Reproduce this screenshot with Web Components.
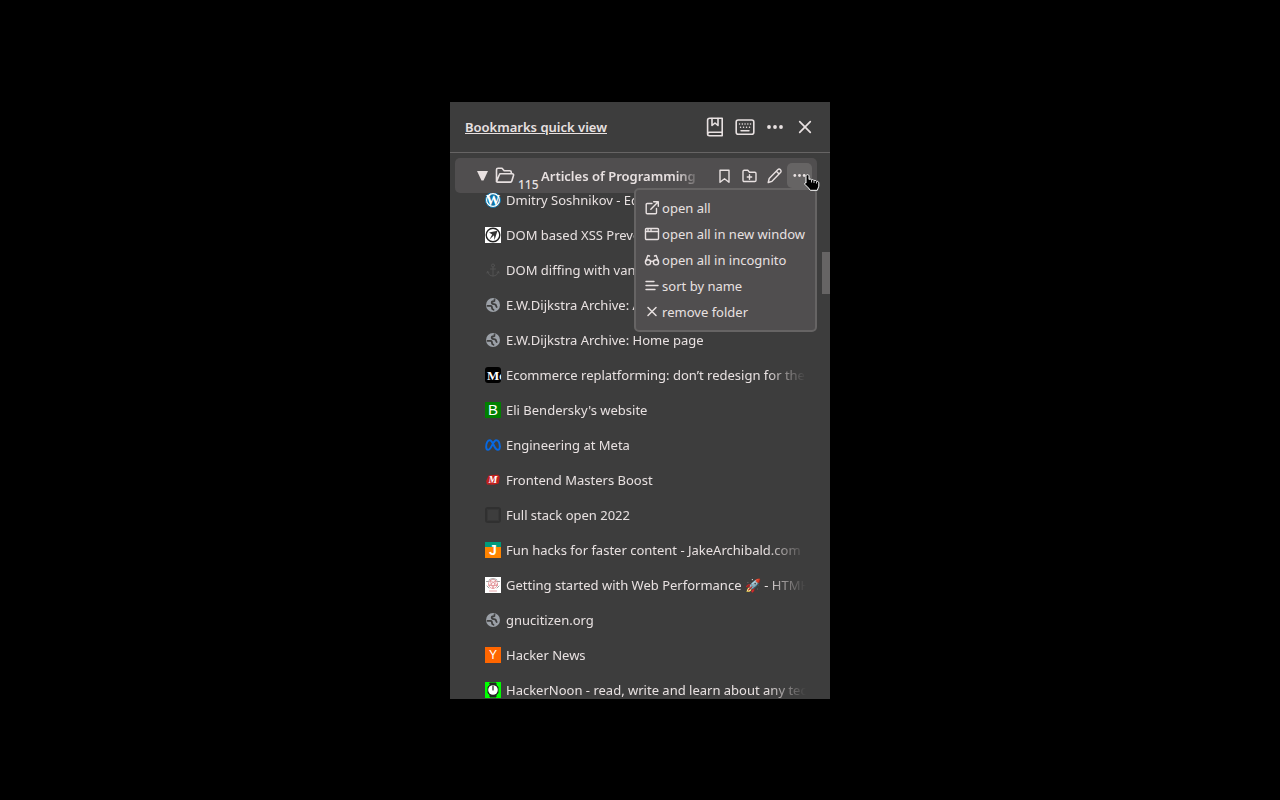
<!DOCTYPE html>
<html lang="en">
<head>
  <meta charset="utf-8">
  <meta name="viewport" content="width=device-width, initial-scale=1">
  <title>Bookmarks quick view</title>
  <style>
    :root {
      --bg: #3d3d3d;
      --raised: #504e4f;
      --line: #666464;
      --text: #e8e1e1;
    }

    * {
      box-sizing: border-box;
    }

    body {
      margin: 0;
      height: 100vh;
      padding: 102px 16px 101px;
      display: flex;
      justify-content: center;
      background: #000;
      color: var(--text);
      font-family: "Noto Sans", "Liberation Sans", sans-serif;
      font-size: 13px;
      line-height: 20px;
    }
  </style>
</head>
<body>
  <quick-view>
    <icon-button slot="actions" icon="book" label="Bookmark manager"></icon-button>
    <icon-button slot="actions" icon="keyboard" label="Keyboard shortcuts"></icon-button>
    <icon-button slot="actions" icon="dots" label="More"></icon-button>
    <icon-button slot="actions" icon="close" label="Close"></icon-button>

    <folder-row count="115">
      Articles of Programming
      <icon-button slot="tools" size="small" icon="bookmark" label="Add bookmark"></icon-button>
      <icon-button slot="tools" size="small" icon="folder-plus" label="Add folder"></icon-button>
      <icon-button slot="tools" size="small" icon="pencil" label="Rename"></icon-button>
      <icon-button slot="tools" size="small" icon="dots-small" label="Folder menu" active></icon-button>
      <folder-menu slot="menu">
        <menu-item icon="external">open all</menu-item>
        <menu-item icon="window">open all in new window</menu-item>
        <menu-item icon="glasses">open all in incognito</menu-item>
        <menu-item icon="sort">sort by name</menu-item>
        <menu-item icon="remove">remove folder</menu-item>
      </folder-menu>
    </folder-row>

    <bookmark-list>
      <bookmark-item icon="wordpress">Dmitry Soshnikov - Edu</bookmark-item>
      <bookmark-item icon="owasp">DOM based XSS Preve</bookmark-item>
      <bookmark-item icon="anchor">DOM diffing with vanil</bookmark-item>
      <bookmark-item icon="globe">E.W.Dijkstra Archive: A</bookmark-item>
      <bookmark-item icon="globe">E.W.Dijkstra Archive: Home page</bookmark-item>
      <bookmark-item icon="medium">Ecommerce replatforming: don’t redesign for the sal</bookmark-item>
      <bookmark-item icon="bendersky">Eli Bendersky's website</bookmark-item>
      <bookmark-item icon="meta">Engineering at Meta</bookmark-item>
      <bookmark-item icon="masters">Frontend Masters Boost</bookmark-item>
      <bookmark-item icon="fullstack">Full stack open 2022</bookmark-item>
      <bookmark-item icon="jake">Fun hacks for faster content - JakeArchibald.com</bookmark-item>
      <bookmark-item icon="htmhell">Getting started with Web Performance 🚀 - HTMHell</bookmark-item>
      <bookmark-item icon="globe">gnucitizen.org</bookmark-item>
      <bookmark-item icon="hn">Hacker News</bookmark-item>
      <bookmark-item icon="hackernoon">HackerNoon - read, write and learn about any techno</bookmark-item>
    </bookmark-list>
  </quick-view>

  <script>
    const svg = (size, body) =>
      `<svg width="${size}" height="${size}" viewBox="0 0 ${size} ${size}" fill="none" stroke="currentColor" stroke-linecap="round" stroke-linejoin="round" aria-hidden="true">${body}</svg>`;

    // Outline icons, drawn with the current text colour
    const ICONS = {
      book: svg(20, `<g stroke-width="1.6"><path d="M4 18.7h13M4.8 1.3h12.4v14H4.6c-1.2 0-2 .8-2 1.7s.8 1.7 2 1.7h12.6v-3.2M2.6 17V3.3c0-1.2.9-2 2.2-2"/><path d="M7 1.5v7L10 6l3 2.5v-7"/></g>`),
      keyboard: svg(20, `<rect x="1.2" y="3" width="17.6" height="14.2" rx="2" stroke-width="1.6"/><path d="M4.5 7h.1M7.3 7h.1M10 7h.1M12.8 7h.1M15.500 7h.1M5.500 10.200h.1M8.500 10.200h.1M11.500 10.200h.1M14.500 10.200h.1M6 13.700h8" stroke-width="1.4"/>`),
      dots: svg(20, `<g fill="currentColor" stroke="none"><circle cx="4" cy="10" r="1.9"/><circle cx="10" cy="10" r="1.9"/><circle cx="16" cy="10" r="1.9"/></g>`),
      close: svg(20, `<path d="M4.7 4.7l10.600 10.600M15.300 4.700L4.700 15.300" stroke-width="1.700"/>`),
      bookmark: svg(16, `<path d="M3 2.200h9v12L7.500 10.700 3 14.200z" stroke-width="1.400"/>`),
      'folder-plus': svg(16, `<path d="M1 3.500c0-.7.400-1.200 1.200-1.200h3.600l1.700 2h5.300c.8 0 1.200.500 1.200 1.200v6.800c0 .700-.4 1.200-1.200 1.200H2.200c-.8 0-1.200-.5-1.200-1.200zM7.500 6.800v4.400M5.300 9h4.400" stroke-width="1.400"/>`),
      pencil: svg(16, `<path d="M1.200 14.500l1-4L10.700 1.800c.8-.8 2-.8 2.800 0 .8.8.8 2 0 2.800L5 13.300zM9.300 3.200l2.800 2.800" stroke-width="1.400"/>`),
      'dots-small': svg(16, `<g fill="currentColor" stroke="none"><circle cx="2.800" cy="7.500" r="1.400"/><circle cx="7.500" cy="7.500" r="1.400"/><circle cx="12.200" cy="7.500" r="1.400"/></g>`),
      folder: svg(20, `<path d="M1.500 15.500V3.700c0-.9.600-1.500 1.500-1.500h4l2.200 2.500h5.600c.9 0 1.500.6 1.500 1.500v1.600M1.500 15.800L4.300 8.700c.2-.6.600-.9 1.200-.9h11.700c1 0 1.600.8 1.300 1.700l-1.700 5.600c-.2.700-.7 1-1.300 1H2.500c-.6 0-1-.3-1-.8z" stroke-width="1.600"/>`),
      external: svg(16, `<path d="M8 3.500H3.200c-.6 0-1 .4-1 1v8.300c0 .6.400 1 1 1h8.300c.6 0 1-.4 1-1V8.500M9.700 1.700h4.600v4.600M14 2L6.800 9.300" stroke-width="1.400"/>`),
      window: svg(16, `<rect x="1.500" y="2.500" width="13" height="11" rx="1" stroke-width="1.400"/><path d="M1.500 5.500h13M4 3v2M7 3v2" stroke-width="1.300"/>`),
      glasses: svg(16, `<g stroke-width="1.400"><circle cx="4" cy="10.300" r="2.600"/><circle cx="12" cy="10.300" r="2.600"/><path d="M6.500 9.700c.8-.8 2.200-.8 3 0M1.600 9.500L3.800 3.500l1.700.5M14.400 9.500l-2.200-6-1.700.5"/></g>`),
      sort: svg(16, `<path d="M2 3.500h8M2 7.500h12M2 11.500h9" stroke-width="1.400"/>`),
      remove: svg(16, `<path d="M4 3.500l8 8M12 3.500l-8 8" stroke-width="1.500"/>`)
    };

    // Site icons, all 16px
    const letter = (bg, ch, size, attrs = '') =>
      `${bg}<text x="8" y="13" text-anchor="middle" fill="#fff" stroke="none" font-family="Liberation Sans, sans-serif" font-size="${size}" ${attrs}>${ch}</text>`;

    const FAVICONS = {
      wordpress: svg(16, `<circle cx="8" cy="8" r="7.500" fill="#fff" stroke="#0b73a8"/><circle cx="8" cy="8" r="5.800" fill="#0b73a8" stroke="none"/>` +
        `<text x="8" y="13" text-anchor="middle" fill="#fff" stroke="none" font-family="Liberation Serif, serif" font-weight="700" font-size="14">W</text>`),
      owasp: svg(16, `<path fill="#fff" stroke="none" d="M0 0h16v16H0z"/><circle cx="8" cy="8" r="6.800" stroke="#222" stroke-width="1.400"/><path d="M12.500 3.800L9.500 13 9 8.300 4.500 12.500l2.700-5L4 5.500z" fill="#333" stroke="none"/>`),
      anchor: svg(16, `<g stroke="#525252"><circle cx="8" cy="3.500" r="1.500"/><path d="M8 5v9M5.500 7h5M2.500 9.500c.5 2.700 2.700 4.500 5.500 4.500s5-1.800 5.500-4.500M2 11l.5-1.500L4 10.500M14 11l-.5-1.500-1.500 1"/></g>`),
      globe: svg(16, `<circle cx="8" cy="8" r="7" fill="#9ba0a7" stroke="none"/><path d="M9.500 2.500c1 1.300-.8 1.800-2 2-1 .2-.9 1.300-.4 2 .6.900 2.700.400 3.600 1.300.6.700.2 1.700 1 2.200M2.500 8.800h3c1.300.2 1.600 1.200 1.500 2.200-.1.800.6 1.400 1.500 1.800" stroke="#3d3d3d" stroke-width="1.800"/><path d="M10.500 3l2.500 3" stroke="#9ba0a7"/>`),
      medium: svg(16, `<rect width="16" height="16" rx="3" fill="#000" stroke="none"/><text x="2" y="13" fill="#fff" stroke="none" font-family="Liberation Serif, serif" font-weight="700" font-size="13">Me</text>`),
      bendersky: svg(16, letter('<path fill="#008000" stroke="none" d="M0 0h16v16H0z"/>', 'B', 15)),
      meta: svg(16, `<path d="M1.200 10.200C1 6 2.800 3.200 4.800 3.200c3.200 0 4.300 9.600 8 9.600 1.500 0 2.200-1.200 2-3.600-.2-3.500-1.600-6-3.600-6C8 3.200 6.500 12.800 3 12.800c-1.100 0-1.700-.9-1.800-2.600z" stroke="#0768e1" stroke-width="2"/>`),
      masters: svg(16, `<path d="M4 4.200l3-.4 6-.2 1 1.400-1 6L8 12l-5.500-.2L2 9z" fill="#c3201f" stroke="#c3201f" stroke-width="1.500"/><text x="8" y="11" text-anchor="middle" fill="#fff" stroke="none" font-family="Liberation Serif, serif" font-style="italic" font-weight="700" font-size="10">M</text>`),
      fullstack: svg(16, `<rect x="1" y="1" width="14" height="14" rx="2" fill="#3d3d3d" stroke="#303030" stroke-width="2"/><rect x="2.500" y="2.500" width="11" height="11" rx="1" stroke="#373737"/>`),
      jake: svg(16, letter('<path fill="#ff8400" stroke="none" d="M0 0h16v16H0z"/><path fill="#009b7c" stroke="none" d="M0 0h16v5H0z"/>', 'J', 14, 'font-weight="700"')),
      htmhell: svg(16, `<path fill="#fff" stroke="none" d="M0 0h16v16H0z"/><g stroke="#df8d92" stroke-width=".8"><circle cx="8" cy="7" r="4.500"/><path d="M5.200 3.500L8 11.500l2.800-8-7 5h8.400zM4.500 14h7"/></g><path d="M4 3a6 6 0 0 1 8 0M1.500 4.500h2M12.500 4.500h2M2 9l2 2M14 9l-2 2" stroke="#888" stroke-width=".8"/>`),
      hn: svg(16, `<path fill="#ff6600" stroke="none" d="M0 0h16v16H0z"/><text x="8" y="12" text-anchor="middle" fill="#fff" stroke="none" font-family="Liberation Sans, sans-serif" font-size="12">Y</text>`),
      hackernoon: svg(16, `<path fill="#00ff00" stroke="none" d="M0 0h16v16H0z"/><path d="M5 1h6v2l2 2v6l-2 2v2H5v-2l-2-2V5l2-2z" fill="#222" stroke="#222"/><circle cx="8" cy="8" r="4.800" fill="#fff" stroke="none"/><path d="M8 4v4" stroke="#222" stroke-width="1.200"/>`)
    };

    class QuickView extends HTMLElement {
      constructor() {
        super();
        this.attachShadow({ mode: 'open' });
        this.shadowRoot.innerHTML = `
          <style>
            :host {
              position: relative;
              display: flex;
              flex-direction: column;
              width: 100%;
              max-width: 380px;
              overflow: hidden;
              background: var(--bg);
            }
            header {
              flex: none;
              display: flex;
              align-items: center;
              justify-content: space-between;
              padding: 10px;
              padding-left: 15px;
              border-bottom: 1px solid var(--line);
            }
            a {
              color: inherit;
              font-weight: 600;
            }
            nav {
              display: flex;
            }
            main {
              flex: 1;
              min-height: 0;
              padding: 5px 13px 0 5px;
            }
            .thumb {
              position: absolute;
              top: 150px;
              right: 0;
              width: 8px;
              height: 42px;
              background: var(--line);
            }
          </style>
          <header>
            <a href="#">Bookmarks quick view</a>
            <nav><slot name="actions"></slot></nav>
          </header>
          <main><slot></slot></main>
          <div class="thumb"></div>
        `;
      }
    }

    class IconButton extends HTMLElement {
      connectedCallback() {
        this.attachShadow({ mode: 'open' });
        this.shadowRoot.innerHTML = `
          <style>
            :host {
              display: block;
            }
            button {
              display: grid;
              place-items: center;
              width: 30px;
              height: 30px;
              padding: 0;
              border: 0;
              border-radius: 5px;
              background: none;
              color: inherit;
            }
            :host([size="small"]) button {
              width: 25px;
              height: 25px;
            }
            :host([active]) button {
              background: var(--line);
            }
          </style>
          <button type="button" aria-label="${this.getAttribute('label')}">${ICONS[this.getAttribute('icon')]}</button>
        `;
      }
    }

    class FolderRow extends HTMLElement {
      connectedCallback() {
        this.attachShadow({ mode: 'open' });
        this.shadowRoot.innerHTML = `
          <style>
            :host {
              position: relative;
              z-index: 1;
              display: flex;
              align-items: center;
              height: 35px;
              padding: 0 5px 0 22px;
              border-radius: 5px;
              background: var(--raised);
            }
            svg {
              flex: none;
              display: block;
            }
            .arrow {
              margin-right: 7px;
            }
            .count {
              flex: none;
              align-self: flex-end;
              width: 26px;
              padding-left: 3px;
              box-sizing: border-box;
              font-size: 12px;
              font-weight: 500;
              line-height: 16px;
            }
            .title {
              flex: 1;
              min-width: 0;
              overflow: hidden;
              white-space: nowrap;
              margin-right: 12px;
              font-weight: 600;
              -webkit-mask-image: linear-gradient(to left, transparent, #000 24px);
              mask-image: linear-gradient(to left, transparent, #000 24px);
            }
            .tools {
              display: flex;
            }
            .pointer {
              position: absolute;
              top: 16px;
              right: -3px;
              z-index: 2;
            }
          </style>
          <svg class="arrow" width="11" height="10" viewBox="0 0 11 10"><path d="M0 0h11L6.500 9.500h-2z" fill="currentColor"/></svg>
          ${ICONS.folder}
          <span class="count">${this.getAttribute('count')}</span>
          <span class="title"><slot></slot></span>
          <div class="tools"><slot name="tools"></slot></div>
          <slot name="menu"></slot>
          <svg class="pointer" width="16" height="17" viewBox="0 0 16 17"><path d="M3.500.7c1 0 1.500.6 1.500 1.500v3.300c1-.7 2-.5 2.500.4 1-.5 2-.2 2.500.7 1-.5 2-.1 2.500.8 1.300-.3 2.300.4 2.300 1.800v3l-1.500 4.100h-7L4.500 14 1 10.500C.2 9.600 1 8.500 2 9V2.200C2 1.300 2.500.7 3.500.7z" fill="#000" stroke="#fff"/><path d="M7.500 6v2.500M10 7v2M12.500 8v1.500" stroke="#fff" stroke-width=".8"/></svg>
        `;
      }
    }

    class FolderMenu extends HTMLElement {
      constructor() {
        super();
        this.attachShadow({ mode: 'open' });
        this.shadowRoot.innerHTML = `
          <style>
            :host {
              position: absolute;
              top: 30px;
              right: 0;
              padding: 5px 10px 5px 8px;
              border: 2px solid var(--line);
              border-radius: 5px;
              background: var(--raised);
            }
          </style>
          <slot></slot>
        `;
      }
    }

    class MenuItem extends HTMLElement {
      connectedCallback() {
        this.attachShadow({ mode: 'open' });
        this.shadowRoot.innerHTML = `
          <style>
            :host {
              display: block;
            }
            button {
              display: flex;
              align-items: center;
              gap: 2px;
              width: 100%;
              height: 26px;
              padding: 0;
              border: 0;
              background: none;
              color: inherit;
              font: inherit;
              white-space: nowrap;
            }
          </style>
          <button type="button">${ICONS[this.getAttribute('icon')]}<span><slot></slot></span></button>
        `;
      }
    }

    class BookmarkList extends HTMLElement {
      constructor() {
        super();
        this.attachShadow({ mode: 'open' });
        // the first row is scrolled part way under the folder row
        this.shadowRoot.innerHTML = `
          <style>
            :host {
              display: block;
              margin-top: -11px;
              padding: 0 11px 0 30px;
            }
          </style>
          <slot></slot>
        `;
      }
    }

    class BookmarkItem extends HTMLElement {
      connectedCallback() {
        this.attachShadow({ mode: 'open' });
        this.shadowRoot.innerHTML = `
          <style>
            :host {
              display: block;
            }
            a {
              display: flex;
              align-items: center;
              gap: 5px;
              height: 35px;
              color: inherit;
              text-decoration: none;
            }
            svg {
              flex: none;
            }
            span {
              flex: 1;
              min-width: 0;
              overflow: hidden;
              white-space: nowrap;
              -webkit-mask-image: linear-gradient(to left, transparent, #000 40px);
              mask-image: linear-gradient(to left, transparent, #000 40px);
            }
          </style>
          <a href="#">${FAVICONS[this.getAttribute('icon')]}<span><slot></slot></span></a>
        `;
      }
    }

    customElements.define('quick-view', QuickView);
    customElements.define('icon-button', IconButton);
    customElements.define('folder-row', FolderRow);
    customElements.define('folder-menu', FolderMenu);
    customElements.define('menu-item', MenuItem);
    customElements.define('bookmark-list', BookmarkList);
    customElements.define('bookmark-item', BookmarkItem);
  </script>
</body>
</html>
